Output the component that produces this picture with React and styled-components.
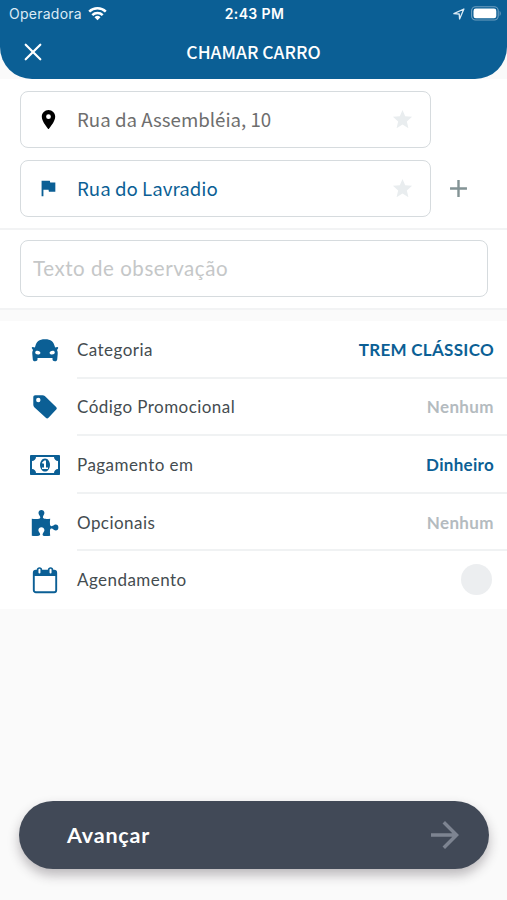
import React from "react";
import styled, { createGlobalStyle } from "styled-components";
import {
  MdAdd,
  MdArrowForward,
  MdFlag,
  MdPlace,
  MdStar,
} from "react-icons/md";

const BLUE = "#0b5f95";

const CarIcon = () => (
  <svg width="28" height="24" viewBox="0 0 28 24">
    <path
      fill={BLUE}
      fillRule="evenodd"
      d="M4.300 8.200C5.400 3.600 8 1.200 14 1.200s8.600 2.400 9.700 7l.5 1.300 2-.6c1-.1 1.200.8.8 1.500l-1 1.600c.6 1.200.8 2.400.7 4.100l-.5 5.300c-.1 1.200-.8 1.800-2.300 1.800s-2.300-.6-2.400-1.700v-1.400h-15v1.400c-.1 1.100-.9 1.700-2.400 1.700s-2.200-.6-2.300-1.800l-.5-5.300c-.1-1.700.1-2.900.7-4.100l-1-1.600c-.4-.7-.2-1.600.8-1.500l2 .6zM4.200 14.400c0 1.300 1.200 2 2.800 2 1.500 0 2.400-.6 2.400-1.500 0-1.200-1.300-2.200-3-2.200-1.400 0-2.200.7-2.200 1.700zm19.600 0c0-1-.8-1.700-2.200-1.700-1.700 0-3 1-3 2.200 0 .9.900 1.500 2.400 1.500 1.600 0 2.800-.7 2.800-2z"
    />
  </svg>
);

const TagIcon = () => (
  <svg width="26" height="26" viewBox="0 0 26 26">
    <path
      fill={BLUE}
      fillRule="evenodd"
      d="M3.300 1.200h7.200c.9 0 1.600.3 2.300.9l11.300 10.800c.9.9.9 1.700.1 2.600l-7.700 8.200c-.9.9-1.800.9-2.700 0L2.300 13.200c-.7-.7-1-1.400-1-2.400V3.200c0-1.300.7-2 2-2zM6.300 3.800a2.200 2.200 0 1 0 0 4.400 2.200 2.200 0 0 0 0-4.400z"
    />
  </svg>
);

const MoneyIcon = () => (
  <svg width="30" height="20" viewBox="0 256 1920 1280">
    <path
      fill={BLUE}
      d="M768 1152h384v-96h-128v-448h-114l-148 137 77 80q42-37 55-57h2v288h-128v96zm512-256q0 70-21 142t-59.500 134-101.500 101-138 39-138-39-101.500-101-59.500-134-21-142 21-142 59.500-134 101.500-101 138-39 138 39 101.500 101 59.500 134 21 142zm512 256v-512q-106 0-181-75t-75-181h-1152q0 106-75 181t-181 75v512q106 0 181 75t75 181h1152q0-106 75-181t181-75zm128-832v1152q0 26-19 45t-45 19h-1792q-26 0-45-19t-19-45v-1152q0-26 19-45t45-19h1792q26 0 45 19t19 45z"
    />
  </svg>
);

const PuzzleIcon = () => (
  <svg width="28" height="28" viewBox="0 0 28 28">
    <path
      fill={BLUE}
      d="M.8 9.700c2.500.4 5.300.4 7.400.1 1.400-.3 1.300-1.500.6-2.700C8.200 5.900 7.500 5.200 7.500 3.800c0-1.700 1.200-2.900 2.900-2.900s3 1.200 3 2.900c0 1.300-.7 2.200-1.200 3.300-.6 1.300-.3 2.400 1.200 2.700 1.700.3 3.700.1 5.800-.1-.3 2.200-.4 4.100-.2 5.800.3 1.600 1.400 2 2.700 1.300 1.100-.7 1.800-1.400 3.100-1.400 1.600 0 2.600 1.300 2.600 3s-1 3-2.600 3c-1.300 0-2-.8-3-1.500-1.400-.9-2.500-.5-2.800 1.200-.2 1.700 0 3.600.2 5.700-2 .3-4.300.4-6.300.2-1.600-.3-1.600-1.700-.8-2.900.7-1.100 1.300-1.600 1.300-3 0-1.800-1.300-2.900-3-2.900s-3 1.100-3 2.900c0 1.400.6 1.900 1.300 3 .8 1.300.6 2.400-.9 2.700-2 .3-4.500.3-7 0z"
    />
  </svg>
);

const CalendarIcon = () => (
  <svg width="26" height="28" viewBox="0 0 26 28">
    <rect x="1.800" y="4.700" width="22.400" height="21.500" rx="2" fill="#fff" stroke={BLUE} strokeWidth="1.900" />
    <path fill={BLUE} d="M1.800 5h22.400v5H1.800z" />
    <rect x="5.600" y="2" width="3.700" height="6.400" rx="1.850" fill="#fff" stroke={BLUE} strokeWidth="1.700" />
    <rect x="16.700" y="2" width="3.700" height="6.400" rx="1.850" fill="#fff" stroke={BLUE} strokeWidth="1.700" />
  </svg>
);

const WifiIcon = () => (
  <svg width="19" height="15" viewBox="0 0 19 15">
    <g fill="none" stroke="#fff" strokeWidth="2.500">
      <path d="M1.200 5.700a11.800 11.800 0 0 1 16.600 0" />
      <path d="M4.300 9.100a7.400 7.400 0 0 1 10.400 0" />
    </g>
    <path fill="#fff" d="M6.500 11.300a4.300 4.300 0 0 1 6 0l-3 3z" />
  </svg>
);

const LocationIcon = () => (
  <svg width="12" height="12" viewBox="0 0 12 12">
    <path d="M.9 5.700 10.900 1 6.600 11 6.200 6z" fill="none" stroke="#dcebf5" strokeWidth="1.300" strokeLinejoin="round" />
  </svg>
);

const BatteryIcon = () => (
  <svg width="31" height="15" viewBox="0 0 31 15">
    <rect x=".6" y=".8" width="26.600" height="13.200" rx="4" fill="none" stroke="#6f9fc0" strokeWidth="1.100" />
    <rect x="2.500" y="2.600" width="22.800" height="9.600" rx="2.300" fill="#fff" />
    <path d="M28.600 5c1.500.5 1.500 4.400 0 4.900z" fill="#6f9fc0" />
  </svg>
);

const CloseIcon = () => (
  <svg width="18" height="18" viewBox="0 0 18 18">
    <path d="m1.700 1.700 14.600 14.600M16.300 1.700 1.700 16.300" stroke="#fff" strokeWidth="2.200" strokeLinecap="round" />
  </svg>
);

const rows = [
  { icon: <CarIcon />, label: "Categoria", value: "TREM CLÁSSICO", color: BLUE, spacing: "0.3px" },
  { icon: <TagIcon />, label: "Código Promocional", value: "Nenhum", color: "#b4bbbf", spacing: "0.4px" },
  { icon: <MoneyIcon />, label: "Pagamento em", value: "Dinheiro", color: BLUE, spacing: "0.3px" },
  { icon: <PuzzleIcon />, label: "Opcionais", value: "Nenhum", color: "#b4bbbf", spacing: "0.4px" },
  { icon: <CalendarIcon />, label: "Agendamento" },
];

const App = () => {
  return (
    <>
      <GlobalStyle />
      <Screen>
        <Header>
          <StatusBar>
            <Carrier>
              <span>Operadora</span>
              <WifiIcon />
            </Carrier>
            <Clock>2:43 PM</Clock>
            <StatusIcons>
              <LocationIcon />
              <BatteryIcon />
            </StatusIcons>
          </StatusBar>
          <NavBar>
            <CloseIcon />
            <Title>CHAMAR CARRO</Title>
          </NavBar>
        </Header>
        <Addresses>
          <AddressLine>
            <AddressBox>
              <AddressIcon>
                <MdPlace size={23} color="#000" />
              </AddressIcon>
              <Address color="#6e6e6e">Rua da Assembléia, 10</Address>
              <MdStar size={23} color="#e9edef" />
            </AddressBox>
          </AddressLine>
          <AddressLine>
            <AddressBox>
              <AddressIcon>
                <MdFlag size={22} color={BLUE} />
              </AddressIcon>
              <Address color={BLUE}>Rua do Lavradio</Address>
              <MdStar size={23} color="#e9edef" />
            </AddressBox>
            <MdAdd size={29} color="#839395" />
          </AddressLine>
        </Addresses>
        <Notes>
          <NoteInput placeholder="Texto de observação" />
        </Notes>
        <Options>
          {rows.map((row) => (
            <OptionRow key={row.label}>
              <IconCell>{row.icon}</IconCell>
              <OptionBody>
                <Label>{row.label}</Label>
                {row.value ? (
                  <Value color={row.color} $spacing={row.spacing}>{row.value}</Value>
                ) : (
                  <Toggle />
                )}
              </OptionBody>
            </OptionRow>
          ))}
        </Options>
        <Footer>
          <NextButton>
            <span>Avançar</span>
            <MdArrowForward size={42} color="#7d8491" />
          </NextButton>
        </Footer>
      </Screen>
    </>
  );
};

export default App;

const GlobalStyle = createGlobalStyle`
  * {
    box-sizing: border-box;
  }
  body {
    margin: 0;
    background: #fafafa;
  }
  svg {
    display: block;
    flex-shrink: 0;
  }
`;

const Screen = styled.div`
  display: flex;
  flex-direction: column;
  height: 900px;
  background: #fafafa;
  font-family: Lato, sans-serif;
`;

const Header = styled.header`
  height: 79px;
  flex-shrink: 0;
  background: ${BLUE};
  border-radius: 0 0 32px 32px;
  color: #fff;
`;

const StatusBar = styled.div`
  display: grid;
  grid-template-columns: 1fr auto 1fr;
  align-items: center;
  height: 27px;
  padding: 0 7px 0 9px;
  font-family: Inter, sans-serif;
  font-size: 14px;
`;

const Carrier = styled.div`
  display: flex;
  align-items: center;
  gap: 6px;
  color: #dcebf5;
  letter-spacing: 0.25px;
`;

const Clock = styled.div`
  font-weight: 600;
  letter-spacing: 0.4px;
`;

const StatusIcons = styled.div`
  display: flex;
  align-items: center;
  justify-content: flex-end;
  gap: 6px;
  margin-right: -2px;
`;

const NavBar = styled.div`
  display: grid;
  grid-template-columns: 18px 1fr 18px;
  align-items: center;
  height: 50px;
  padding: 0 24px;
`;

const Title = styled.h1`
  margin: 0;
  font: 500 17.500px/24px "Noto Sans CJK SC", sans-serif;
  text-align: center;
`;

const Addresses = styled.section`
  display: flex;
  flex-direction: column;
  gap: 12px;
  height: 151px;
  flex-shrink: 0;
  padding: 12px 20px 0;
  background: #fff;
  border-bottom: 2px solid #f2f3f4;
`;

const AddressLine = styled.div`
  display: flex;
  align-items: center;
  gap: 13px;
`;

const AddressBox = styled.div`
  display: flex;
  align-items: center;
  width: 411px;
  height: 57px;
  padding: 0 16px 1px;
  border: 1px solid #d6dbde;
  border-radius: 8px;
`;

const AddressIcon = styled.div`
  width: 23px;
`;

const Address = styled.span`
  flex: 1;
  margin-left: 17px;
  font: 400 18.700px/28px "Noto Sans CJK SC", sans-serif;
  color: ${(props) => props.color};
`;

const Notes = styled.section`
  height: 80px;
  flex-shrink: 0;
  padding: 10px 19px 0 20px;
  background: #fff;
  border-bottom: 2px solid #f2f3f4;
`;

const NoteInput = styled.input`
  width: 100%;
  height: 57px;
  padding: 0 12px 2px;
  border: 1px solid #d6dbde;
  border-radius: 8px;
  outline: none;
  font: 400 20.500px Lato, sans-serif;
  letter-spacing: 0.55px;

  &::placeholder {
    color: #c5c7c8;
    opacity: 1;
  }
`;

const Options = styled.section`
  display: flex;
  flex-direction: column;
  height: 288px;
  flex-shrink: 0;
  margin-top: 11px;
  background: #fff;
`;

const OptionRow = styled.div`
  display: flex;
  flex: 1;
`;

const IconCell = styled.div`
  display: flex;
  align-items: center;
  justify-content: center;
  width: 62px;
  margin: 0 1px 0 14px;
`;

const OptionBody = styled.div`
  display: flex;
  align-items: center;
  justify-content: space-between;
  flex: 1;
  padding: 1px 13px 0 0;
  border-bottom: 2px solid #f0f2f3;

  ${OptionRow}:last-child & {
    border-bottom-color: transparent;
  }
`;

const Label = styled.span`
  font-size: 17px;
  letter-spacing: 0.45px;
  color: #444c50;
`;

const Value = styled.span`
  font-size: 17px;
  font-weight: 700;
  letter-spacing: ${(props) => props.$spacing};
  color: ${(props) => props.color};
`;

const Toggle = styled.div`
  width: 31px;
  height: 31px;
  margin-right: 2px;
  border-radius: 50%;
  background: #eceef0;
`;

const Footer = styled.footer`
  margin-top: auto;
  padding: 0 18px 31px 19px;
`;

const NextButton = styled.button`
  display: flex;
  align-items: center;
  justify-content: space-between;
  width: 100%;
  height: 68px;
  padding: 0 23px 0 48px;
  border: 0;
  border-radius: 34px;
  background: #414957;
  box-shadow: 0 6px 12px rgba(40, 30, 40, 0.3);
  color: #fff;
  font: 700 21.500px Lato, sans-serif;
  letter-spacing: 0.8px;
`;
